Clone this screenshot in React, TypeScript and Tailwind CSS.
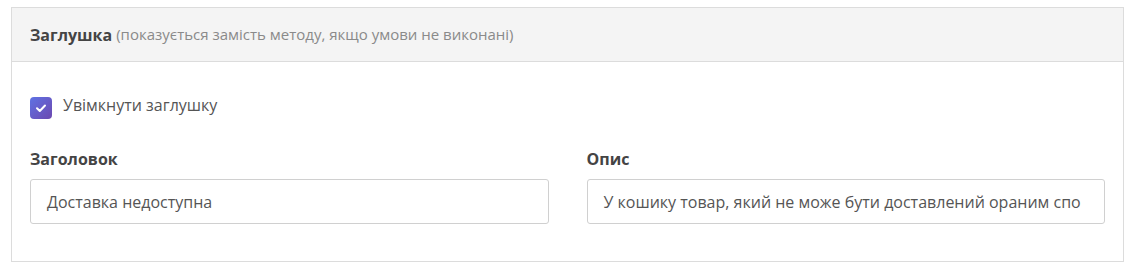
export default function App() {
  return (
    <div className="min-h-screen bg-white pt-[7px] pl-[11px] pr-[13px] font-['Open_Sans',sans-serif] text-[#4a4a4a]">
      <div className="border border-[#dcdcdc]">
        {/* Header */}
        <div className="h-[54px] flex items-center px-[18px] bg-[#f4f4f4] border-b border-[#dcdcdc]">
          <span className="text-[16px] font-bold text-[#444]">Заглушка</span>
          <span className="ml-[4px] text-[15px] text-[#8a8a8a]">(показується замість методу, якщо умови не виконані)</span>
        </div>

        {/* Body */}
        <div className="px-[18px] pt-[35px] pb-[37px]">
          <label className="flex items-center gap-[11px]">
            <span className="w-[22px] h-[22px] rounded-[4px] bg-gradient-to-br from-[#5d72e4] to-[#6b48b0] flex items-center justify-center">
              <svg width="12" height="12" viewBox="0 0 12 12" fill="none">
                <path d="M2 6.2 L4.8 9 L10 3.5" stroke="white" strokeWidth="2" strokeLinecap="round" strokeLinejoin="round" />
              </svg>
            </span>
            <span className="text-[16px] text-[#555] -mt-[6px]">Увімкнути заглушку</span>
          </label>

          <div className="grid grid-cols-2 gap-[38px] mt-[29px]">
            <div>
              <div className="text-[16px] font-bold text-[#444] leading-[22px]">Заголовок</div>
              <div className="mt-[9px] h-[45px] border border-[#d0d0d0] rounded-[3px] px-[16px] flex items-center text-[16px] text-[#555] whitespace-nowrap overflow-hidden">
                Доставка недоступна
              </div>
            </div>
            <div>
              <div className="text-[16px] font-bold text-[#444] leading-[22px]">Опис</div>
              <div className="mt-[9px] h-[45px] border border-[#d0d0d0] rounded-[3px] px-[16px] flex items-center text-[16px] text-[#555] whitespace-nowrap overflow-hidden">
                У кошику товар, який не може бути доставлений ораним спо
              </div>
            </div>
          </div>
        </div>
      </div>
    </div>
  );
}
